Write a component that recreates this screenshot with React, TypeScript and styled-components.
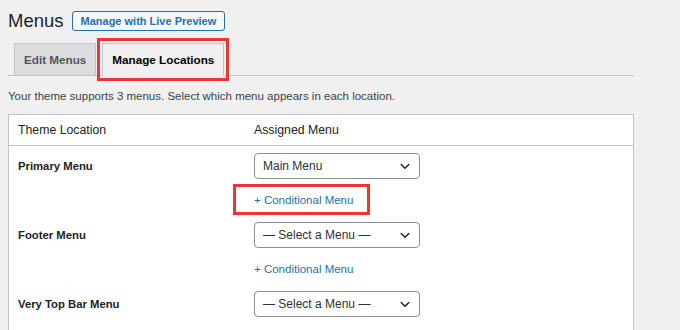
import React from "react";
import styled, { createGlobalStyle } from "styled-components";

const Global = createGlobalStyle`
  html, body { margin: 0; padding: 0; background: #f0f0f1; }
  body {
    font-family: "Liberation Sans", Arial, sans-serif;
    color: #3c434a;
    width: 680px;
    height: 330px;
    overflow: hidden;
  }
  * { box-sizing: border-box; }
`;

const Wrap = styled.div`
  padding: 0 46px 0 8px;
`;

const Header = styled.div`
  display: flex;
  align-items: center;
  gap: 8px;
  padding-top: 10px;
  height: 32px;
`;

const Title = styled.h1`
  margin: 0;
  font-size: 18.5px;
  font-weight: 400;
  line-height: 22px;
  color: #1d2327;
`;

const PreviewButton = styled.a`
  display: inline-flex;
  align-items: center;
  height: 20px;
  padding: 0 8px;
  border: 1px solid #2271b1;
  border-radius: 3px;
  background: #f6f7f7;
  color: #2271b1;
  font-size: 11px;
  font-weight: 700;
  text-decoration: none;
`;

const TabBar = styled.nav`
  display: flex;
  align-items: flex-end;
  gap: 6px;
  margin-top: 11px;
  padding-left: 6px;
  border-bottom: 1px solid #c3c4c7;
`;

const Tab = styled.a<{ $active?: boolean; $marked?: boolean }>`
  display: flex;
  align-items: center;
  height: ${(p) => (p.$active ? "33px" : "32px")};
  margin-bottom: ${(p) => (p.$active ? "-1px" : "0")};
  padding: 0 9px;
  border: 1px solid #c3c4c7;
  border-bottom: ${(p) => (p.$active ? "1px solid #f0f0f1" : "none")};
  background: ${(p) => (p.$active ? "#f0f0f1" : "#dcdcde")};
  color: ${(p) => (p.$active ? "#000" : "#50575e")};
  font-size: 11.7px;
  font-weight: 700;
  text-decoration: none;
  outline: ${(p) => (p.$marked ? "3px solid #ec3535" : "none")};
  outline-offset: 2px;
`;

const Description = styled.p`
  margin: 11px 0 0;
  font-size: 11.5px;
  line-height: 18px;
  color: #3c434a;
`;

const Table = styled.div`
  margin-top: 9px;
  min-height: 250px;
  background: #fff;
  border: 1px solid #c3c4c7;
  box-shadow: 0 1px 1px rgba(0, 0, 0, 0.04);
`;

const HeadRow = styled.div`
  display: grid;
  grid-template-columns: 235px 1fr;
  align-items: center;
  height: 31px;
  border-bottom: 1px solid #c3c4c7;
  font-size: 12.3px;
  color: #1d2327;
`;

const HeadCell = styled.div<{ $first?: boolean }>`
  padding-left: ${(p) => (p.$first ? "9px" : "10px")};
`;

const Row = styled.div`
  display: grid;
  grid-template-columns: 235px 1fr;
  align-items: start;
  padding: 7px 0 6px;
`;

const Label = styled.div`
  display: flex;
  align-items: center;
  height: 26px;
  padding-left: 9px;
  font-size: 11.3px;
  font-weight: 700;
  color: #1d2327;
`;

const Cell = styled.div`
  display: flex;
  flex-direction: column;
  align-items: flex-start;
  gap: 12px;
  padding-left: 10px;
`;

const Select = styled.div`
  display: flex;
  align-items: center;
  justify-content: space-between;
  width: 166px;
  height: 26px;
  padding: 0 9px 0 8px;
  border: 1px solid #8c8f94;
  border-radius: 4px;
  background: #fff;
  font-size: 12px;
  color: #2c3338;
`;

const CondLink = styled.a<{ $marked?: boolean }>`
  display: inline-block;
  font-size: 11.5px;
  line-height: 18px;
  color: #2271b1;
  text-decoration: none;
  padding: ${(p) => (p.$marked ? "4px 14px 3px 18px" : "0")};
  margin: ${(p) => (p.$marked ? "-4px -14px -3px -18px" : "0")};
  outline: ${(p) => (p.$marked ? "3px solid #ec3535" : "none")};
`;

const Chevron = () => (
  <svg width="10" height="7" viewBox="0 0 10 7" aria-hidden="true">
    <polyline
      points="1.2,1.5 5,5.2 8.8,1.5"
      fill="none"
      stroke="#1d2327"
      strokeWidth="1.5"
      strokeLinecap="round"
      strokeLinejoin="round"
    />
  </svg>
);

const rows = [
  { label: "Primary Menu", value: "Main Menu", marked: true, link: true },
  { label: "Footer Menu", value: "— Select a Menu —", marked: false, link: true },
  { label: "Very Top Bar Menu", value: "— Select a Menu —", marked: false, link: false },
];

export default function App() {
  return (
    <>
      <Global />
      <Wrap>
        <Header>
          <Title>Menus</Title>
          <PreviewButton href="#">Manage with Live Preview</PreviewButton>
        </Header>
        <TabBar>
          <Tab href="#">Edit Menus</Tab>
          <Tab href="#" $active $marked>
            Manage Locations
          </Tab>
        </TabBar>
        <Description>
          Your theme supports 3 menus. Select which menu appears in each location.
        </Description>
        <Table>
          <HeadRow>
            <HeadCell $first>Theme Location</HeadCell>
            <HeadCell>Assigned Menu</HeadCell>
          </HeadRow>
          {rows.map((r) => (
            <Row key={r.label}>
              <Label>{r.label}</Label>
              <Cell>
                <Select>
                  <span>{r.value}</span>
                  <Chevron />
                </Select>
                {r.link && (
                  <CondLink href="#" $marked={r.marked}>
                    + Conditional Menu
                  </CondLink>
                )}
              </Cell>
            </Row>
          ))}
        </Table>
      </Wrap>
    </>
  );
}
